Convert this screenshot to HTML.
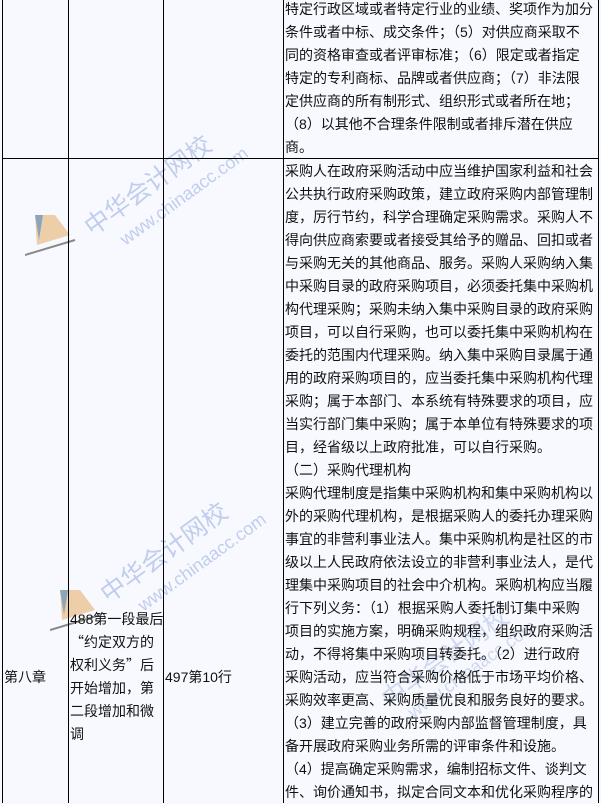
<!DOCTYPE html>
<html><head><meta charset="utf-8">
<style>
html,body{margin:0;padding:0}
body{width:601px;height:803px;overflow:hidden;background:#f7f9fe;position:relative;font-family:"Liberation Sans","Noto Sans CJK SC",sans-serif;font-size:14px;color:#111}
.v{position:absolute;top:0;width:1px;height:803px;background:#000}
.h{position:absolute;left:2px;width:597px;height:1px;background:#000}
.t{position:absolute;white-space:nowrap;line-height:23px}
.t div{height:23px}
.q{font-family:"Noto Sans CJK SC",sans-serif}
.wm{position:absolute;white-space:nowrap;color:rgba(110,140,210,0.4);transform-origin:0 50%;line-height:1}
</style></head><body>
<div class="wm" style="left:88px;top:218px;transform:rotate(-36deg);font-size:25px">中华会计网校</div>
<div class="wm" style="left:122px;top:232px;transform:rotate(-36deg);font-size:18px">www.chinaacc.com</div>
<div class="wm" style="left:104px;top:585px;transform:rotate(-36deg);font-size:25px">中华会计网校</div>
<div class="wm" style="left:140px;top:598px;transform:rotate(-36deg);font-size:18px">www.chinaacc.com</div>
<div class="wm" style="left:385px;top:690px;transform:rotate(-36deg);font-size:25px;color:rgba(110,140,210,0.3)">中华会计网校</div>
<div class="wm" style="left:410px;top:705px;transform:rotate(-36deg);font-size:18px;color:rgba(110,140,210,0.3)">www.chinaacc.com</div>
<svg style="position:absolute;left:25px;top:210px" width="55" height="50"><polygon points="10,5 30,5 45,25 12,35" fill="#e8b070" opacity=".6"/><polygon points="10,5 18,5 14,30" fill="#4a8cc8" opacity=".6"/><line x1="0" y1="45" x2="50" y2="30" stroke="#888" stroke-width="2"/></svg>
<svg style="position:absolute;left:50px;top:585px" width="55" height="50"><polygon points="10,5 30,5 45,25 12,35" fill="#e8b070" opacity=".6"/><polygon points="10,5 18,5 14,30" fill="#4a8cc8" opacity=".6"/><line x1="0" y1="45" x2="50" y2="30" stroke="#888" stroke-width="2"/></svg>

<div class="v" style="left:2px"></div>
<div class="v" style="left:68px"></div>
<div class="v" style="left:163px"></div>
<div class="v" style="left:283px"></div>
<div class="v" style="left:598px"></div>
<div class="h" style="top:158px"></div>

<div class="t" style="left:285px;top:-2px">
<div>特定行政区域或者特定行业的业绩、奖项作为加分</div>
<div>条件或者中标、成交条件；（5）对供应商采取不</div>
<div>同的资格审查或者评审标准；（6）限定或者指定</div>
<div>特定的专利商标、品牌或者供应商；（7）非法限</div>
<div>定供应商的所有制形式、组织形式或者所在地；</div>
<div>（8）以其他不合理条件限制或者排斥潜在供应</div>
<div>商。</div>
</div>

<div class="t" style="left:285px;top:160px">
<div>采购人在政府采购活动中应当维护国家利益和社会</div>
<div>公共执行政府采购政策，建立政府采购内部管理制</div>
<div>度，厉行节约，科学合理确定采购需求。采购人不</div>
<div>得向供应商索要或者接受其给予的赠品、回扣或者</div>
<div>与采购无关的其他商品、服务。采购人采购纳入集</div>
<div>中采购目录的政府采购项目，必须委托集中采购机</div>
<div>构代理采购；采购未纳入集中采购目录的政府采购</div>
<div>项目，可以自行采购，也可以委托集中采购机构在</div>
<div>委托的范围内代理采购。纳入集中采购目录属于通</div>
<div>用的政府采购项目的，应当委托集中采购机构代理</div>
<div>采购；属于本部门、本系统有特殊要求的项目，应</div>
<div>当实行部门集中采购；属于本单位有特殊要求的项</div>
<div>目，经省级以上政府批准，可以自行采购。</div>
<div>（二）采购代理机构</div>
<div>采购代理制度是指集中采购机构和集中采购机构以</div>
<div>外的采购代理机构，是根据采购人的委托办理采购</div>
<div>事宜的非营利事业法人。集中采购机构是社区的市</div>
<div>级以上人民政府依法设立的非营利事业法人，是代</div>
<div>理集中采购项目的社会中介机构。采购机构应当履</div>
<div>行下列义务：（1）根据采购人委托制订集中采购</div>
<div>项目的实施方案，明确采购规程，组织政府采购活</div>
<div>动，不得将集中采购项目转委托。（2）进行政府</div>
<div>采购活动，应当符合采购价格低于市场平均价格、</div>
<div>采购效率更高、采购质量优良和服务良好的要求。</div>
<div>（3）建立完善的政府采购内部监督管理制度，具</div>
<div>备开展政府采购业务所需的评审条件和设施。</div>
<div>（4）提高确定采购需求，编制招标文件、谈判文</div>
<div>件、询价通知书，拟定合同文本和优化采购程序的</div>
</div>

<div class="t" style="left:4px;top:666px"><div>第八章</div></div>
<div class="t" style="left:70px;top:608px">
<div>488第一段最后</div>
<div><span class="q">“</span>约定双方的</div>
<div>权利义务<span class="q">”</span>后</div>
<div>开始增加，第</div>
<div>二段增加和微</div>
<div>调</div>
</div>
<div class="t" style="left:165px;top:666px"><div>497第10行</div></div>
</body></html>
